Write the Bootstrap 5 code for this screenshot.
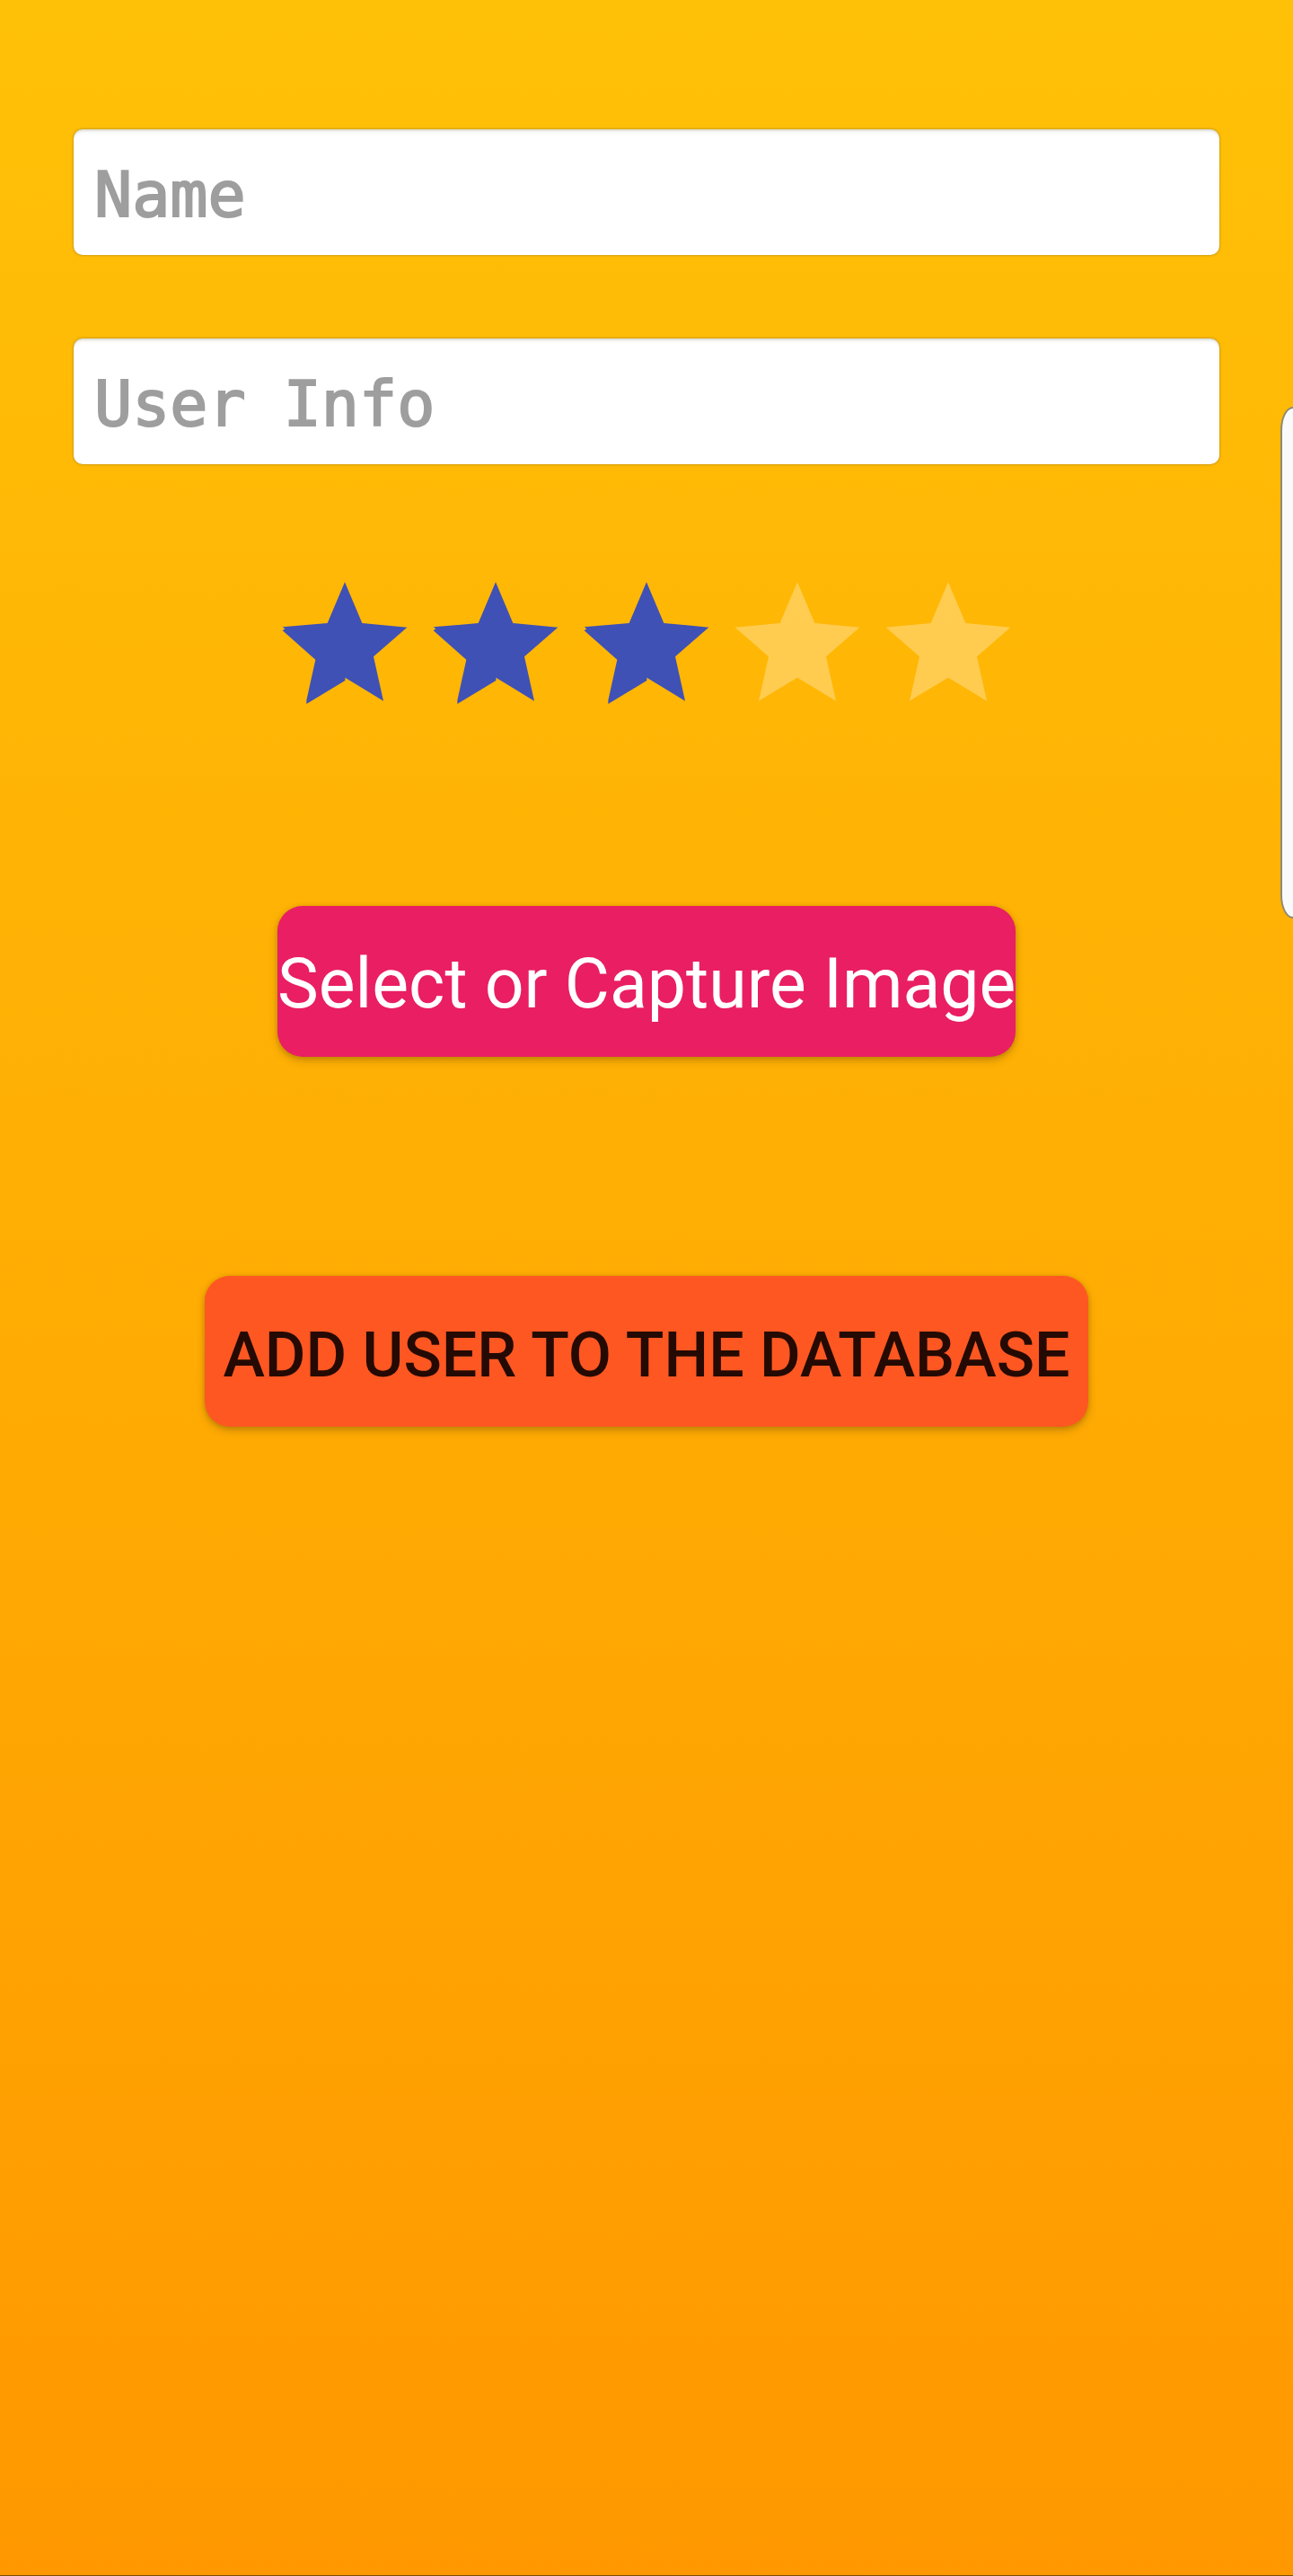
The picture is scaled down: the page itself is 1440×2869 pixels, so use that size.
<!DOCTYPE html>
<html lang="en">
<head>
<meta charset="utf-8">
<meta name="viewport" content="width=device-width, initial-scale=1">
<title>Add User</title>
<link href="https://cdn.jsdelivr.net/npm/bootstrap@5.3.0/dist/css/bootstrap.min.css" rel="stylesheet">
<style>
  body {
    font-family: Roboto, "Liberation Sans", sans-serif;
    background: linear-gradient(#ffc107, #ff9800);
    border-bottom: 1px solid #804c00;
  }
  .user-form { padding: 144px 82px 0; }
  .user-fields { gap: 93px; }
  .user-field {
    height: 140px;
    padding: 6px 23px 0;
    border: 0;
    border-radius: 10px;
    font-family: "DejaVu Sans Mono", monospace;
    font-size: 70px;
    box-shadow: 0 0 3px rgba(100, 90, 50, .6), inset 0 3px 3px -1px rgba(90, 85, 50, .22);
  }
  .user-field::placeholder { color: #9e9e9e; opacity: 1; -webkit-text-stroke: 2px #9e9e9e; }
  .user-rating { margin-top: 113px; }
  .star-label { width: 168px; color: #3f51b5; cursor: pointer; }
  .star-label svg { width: 100%; height: 170px; }
  .star-empty { color: rgba(255, 255, 255, .3); }
  .action-btn {
    height: 168px;
    border: 0;
    border-radius: 28px;
    white-space: nowrap;
    box-shadow: 0 4px 9px rgba(90, 60, 0, .35), 0 0 4px rgba(90, 60, 0, .15);
  }
  .image-btn {
    margin-top: 209px;
    padding: 8px 0 0;
    width: 822px;
    font-size: 77px;
    --bs-btn-color: #fff;
    --bs-btn-bg: #e91e63;
    --bs-btn-hover-color: #fff;
    --bs-btn-hover-bg: #d81b60;
  }
  .add-btn {
    margin-top: 244px;
    padding: 8px 0 0;
    width: 984px;
    font-size: 70px;
    font-weight: 500;
    --bs-btn-color: #240a03;
    --bs-btn-bg: #ff5722;
    --bs-btn-hover-color: #240a03;
    --bs-btn-hover-bg: #f4511e;
  }
  /* Edge panel handle that lies over the right side of the screen */
  .edge-handle {
    top: 453px;
    width: 14px;
    height: 570px;
    background: #fafafa;
    border: 2px solid #8f8a72;
    border-right: 0;
    border-radius: 14px 0 0 14px / 26px 0 0 26px;
  }
</style>
</head>
<body class="min-vh-100 position-relative">
<svg class="d-none" aria-hidden="true">
  <symbol id="star-on" viewBox="0 0 504 510">
    <path fill="currentColor" d="M252 55L310 192L460 206L348 304L381 452L253 374V384L124 462V450L154 314L44 217L52 211L44 205L194 192Z"/>
  </symbol>
  <symbol id="star-off" viewBox="0 0 504 510">
    <path fill="currentColor" d="M252 55L310 192L460 206L348 304L381 452L252 374L123 452L156 304L44 206L194 192Z"/>
  </symbol>
</svg>
<main>
  <form class="user-form d-flex flex-column align-items-center">
    <div class="user-fields d-flex flex-column w-100">
      <input type="text" class="form-control user-field" placeholder="Name" aria-label="Name">
      <input type="text" class="form-control user-field" placeholder="User Info" aria-label="User Info">
    </div>
    <div class="user-rating d-flex" role="radiogroup" aria-label="Rating">
      <input class="btn-check" type="radio" name="rating" id="rate1" value="1" aria-label="1 star">
      <label class="star-label d-flex" for="rate1"><svg><use href="#star-on"/></svg></label>
      <input class="btn-check" type="radio" name="rating" id="rate2" value="2" aria-label="2 stars">
      <label class="star-label d-flex" for="rate2"><svg><use href="#star-on"/></svg></label>
      <input class="btn-check" type="radio" name="rating" id="rate3" value="3" aria-label="3 stars" checked>
      <label class="star-label d-flex" for="rate3"><svg><use href="#star-on"/></svg></label>
      <input class="btn-check" type="radio" name="rating" id="rate4" value="4" aria-label="4 stars">
      <label class="star-label star-empty d-flex" for="rate4"><svg><use href="#star-off"/></svg></label>
      <input class="btn-check" type="radio" name="rating" id="rate5" value="5" aria-label="5 stars">
      <label class="star-label star-empty d-flex" for="rate5"><svg><use href="#star-off"/></svg></label>
    </div>
    <button type="button" class="btn action-btn image-btn">Select or Capture Image</button>
    <button type="submit" class="btn action-btn add-btn text-uppercase">Add user to the database</button>
  </form>
</main>
<div class="edge-handle position-absolute end-0"></div>
<script src="https://cdn.jsdelivr.net/npm/bootstrap@5.3.0/dist/js/bootstrap.bundle.min.js"></script>
</body>
</html>
